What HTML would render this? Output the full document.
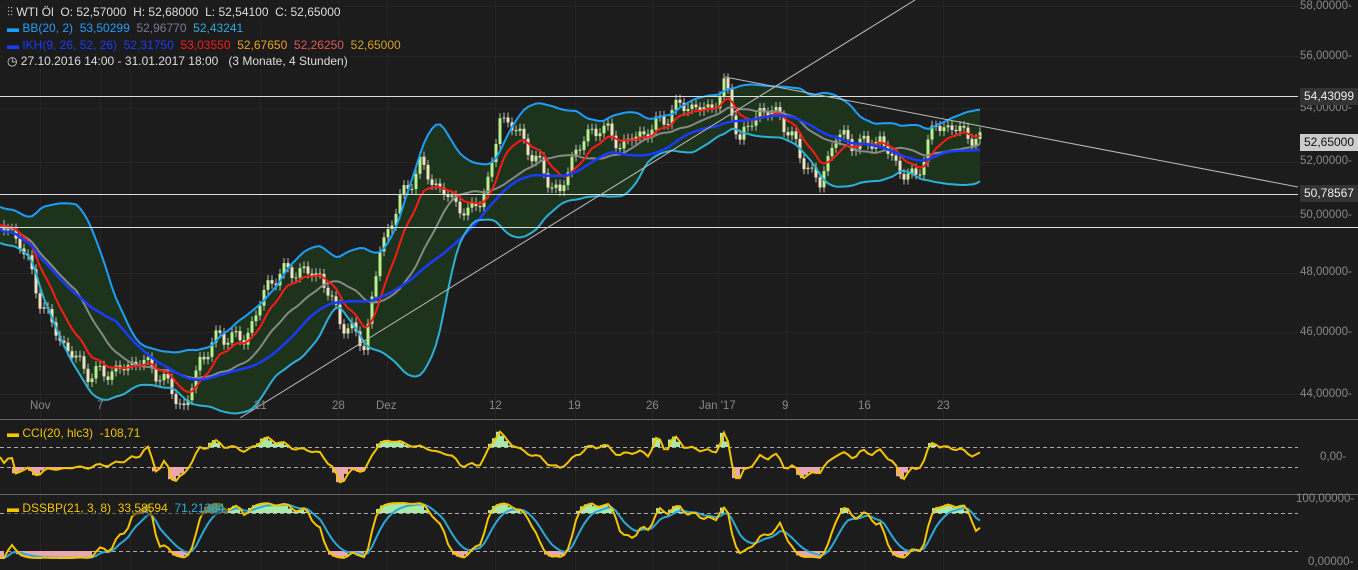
<!DOCTYPE html>
<html><head><meta charset="utf-8"><style>
body{margin:0;background:#1c1c1c;width:1358px;height:570px;overflow:hidden;font-family:"Liberation Sans",sans-serif;}
#c{position:absolute;left:0;top:0}
.lg{position:absolute;left:4px;font-size:12px;color:#ddd;white-space:pre;line-height:16px;background:rgba(28,28,28,.8);padding:0 3px}
.ax{position:absolute;font-size:11.5px;color:#888;}
.tag{position:absolute;left:1300px;width:58px;height:17px;font-size:12px;line-height:17px;text-align:center}
</style></head><body>
<svg id="c" width="1358" height="570"></svg>
<div class="lg" style="top:4px"><span style="color:#ccc">⫶⫶</span> WTI Öl  O: 52,57000  H: 52,68000  L: 52,54100  C: 52,65000</div>
<div class="lg" style="top:20px"><span style="color:#1e9fff">▬</span> <span style="color:#1e9fff">BB(20, 2)  53,50299</span>  <span style="color:#777a99">52,96770</span>  <span style="color:#2cb0d8">52,43241</span></div>
<div class="lg" style="top:37px"><span style="color:#1a3cff">▬ IKH(9, 26, 52, 26)  52,31750</span>  <span style="color:#ff1a1a">53,03550</span>  <span style="color:#f0a020">52,67650</span>  <span style="color:#e05858">52,26250</span>  <span style="color:#d8a020">52,65000</span></div>
<div class="lg" style="top:53px">◷ 27.10.2016 14:00 - 31.01.2017 18:00   (3 Monate, 4 Stunden)</div>
<div class="lg" style="top:425px;color:#f5c400">▬ CCI(20, hlc3)  -108,71</div>
<div class="lg" style="top:500px;color:#f5c400;background:rgba(28,28,28,.5)">▬ DSSBP(21, 3, 8)  33,58594  <span style="color:#2cb0d8">71,21384</span></div>
<div class="ax" style="left:1300px;top:0">58,00000-</div>
<div class="ax" style="left:1300px;top:50px">56,00000-</div>
<div class="ax" style="left:1300px;top:102px">54,00000-</div>
<div class="ax" style="left:1300px;top:155px">52,00000-</div>
<div class="ax" style="left:1300px;top:209px">50,00000-</div>
<div class="ax" style="left:1300px;top:266px">48,00000-</div>
<div class="ax" style="left:1300px;top:326px">46,00000-</div>
<div class="ax" style="left:1300px;top:388px">44,00000-</div>
<div class="ax" style="left:1320px;top:451px">0,00-</div>
<div class="ax" style="left:1296px;top:493px">100,00000-</div>
<div class="ax" style="left:1308px;top:556px">0,00000-</div>
<div class="tag" style="top:88px;background:#333;color:#eee">54,43099</div>
<div class="tag" style="top:134px;background:#ccc;color:#111">52,65000</div>
<div class="tag" style="top:185px;background:#333;color:#eee">50,78567</div>
<div class="ax" style="left:30px;top:400px">Nov</div>
<div class="ax" style="left:97px;top:400px">7</div>
<div class="ax" style="left:254px;top:400px">21</div>
<div class="ax" style="left:332px;top:400px">28</div>
<div class="ax" style="left:376px;top:400px">Dez</div>
<div class="ax" style="left:489px;top:400px">12</div>
<div class="ax" style="left:568px;top:400px">19</div>
<div class="ax" style="left:646px;top:400px">26</div>
<div class="ax" style="left:699px;top:400px">Jan '17</div>
<div class="ax" style="left:782px;top:400px">9</div>
<div class="ax" style="left:858px;top:400px">16</div>
<div class="ax" style="left:937px;top:400px">23</div>
<script>
var S=document.getElementById('c'),h='';
function L(x1,y1,x2,y2,c,w,d){h+='<line x1="'+x1+'" y1="'+y1+'" x2="'+x2+'" y2="'+y2+'" stroke="'+c+'" stroke-width="'+(w||1)+'"'+(d?' stroke-dasharray="'+d+'"':'')+'/>';}
[6,56,108,162,216,273,332,394].forEach(y=>L(0,y+.5,1298,y+.5,'#262626'));
[40,100,130,260,338,387,495,575,652,718,786,865,943].forEach(x=>L(x+.5,0,x+.5,570,'#262626'));
var K=[[0,225],[20,240],[40,300],[60,340],[90,375],[120,370],[140,360],[160,375],[185,410],[200,360],[220,335],[245,340],[270,280],[290,270],[320,275],[340,320],[365,345],[380,250],[400,200],[420,165],[440,190],[470,215],[490,180],[500,115],[520,135],[545,175],[560,195],[575,150],[600,125],[620,145],[650,130],[680,105],[710,110],[725,85],[740,140],[760,110],[780,115],[800,155],[820,185],[835,135],[860,145],[880,140],[900,170],[915,180],[935,125],[960,130],[980,142]];
function yi(x){for(var i=1;i<K.length;i++)if(x<=K[i][0]){var a=K[i-1],b=K[i],t=(x-a[0])/(b[0]-a[0]);return a[1]+(b[1]-a[1])*t;}return 142;}
var X=[],Y=[];for(var x=0;x<=980;x+=4){X.push(x);Y.push(yi(x)+6*Math.sin(x*0.37)+4*Math.sin(x*1.3));}
var n=Y.length;
function ema(a,p){var r=[],k=2/(p+1),v=a[0];a.forEach(z=>{v=v+k*(z-v);r.push(v)});return r;}
function sma(a,p){return a.map((z,i)=>{var s=0,c=0;for(var j=Math.max(0,i-p+1);j<=i;j++){s+=a[j];c++}return s/c});}
function pl(a,c,w,xs){return '<polyline fill="none" stroke="'+c+'" stroke-width="'+w+'" points="'+a.map((y,i)=>(xs||X)[i]+','+y.toFixed(1)).join(' ')+'"/>';}
var mid=sma(Y,20),up=[],lo=[];
for(var i=0;i<n;i++){var s=0,c=0;for(var j=Math.max(0,i-19);j<=i;j++){s+=(Y[j]-mid[i])**2;c++}var sd=Math.max(Math.sqrt(s/c),10);up.push(mid[i]-1.8*sd);lo.push(mid[i]+1.8*sd);}
up=ema(up,3);lo=ema(lo,3);
h+='<polygon fill="#1d331b" points="'+up.map((y,i)=>X[i]+','+y.toFixed(1)).join(' ')+' '+lo.map((y,i)=>X[i]+','+y.toFixed(1)).reverse().join(' ')+'"/>';
for(i=1;i<n;i++){var o=Y[i-1],cl=Y[i],g=cl<o;h+='<line x1="'+X[i]+'" y1="'+(Math.min(o,cl)-5)+'" x2="'+X[i]+'" y2="'+(Math.max(o,cl)+5)+'" stroke="#bbb" stroke-width="1"/><rect x="'+(X[i]-1.5)+'" y="'+Math.min(o,cl)+'" width="3" height="'+Math.max(1,Math.abs(cl-o))+'" fill="'+(g?'#b8f08a':'#f0e0c0')+'"/>';}
h+=pl(mid,'#888',2)+pl(ema(Y,9),'#ff1a1a',2)+pl(sma(Y,30).map((v,i)=>v+4),'#1a3cff',2.5)+pl(up,'#1e9fff',2)+pl(lo,'#2cb0d8',2);
L(0,96.5,1298,96.5,'#ddd');L(0,194.5,1298,194.5,'#ddd');L(0,227.5,1358,227.5,'#ddd');
L(240,418,915,0,'#bbb');L(725,77,1298,187,'#bbb');
h+='<rect x="0" y="418" width="1358" height="152" fill="#1c1c1c"/>';
[40,100,130,260,338,387,495,575,652,718,786,865,943].forEach(x=>L(x+.5,420,x+.5,570,'#262626'));
L(0,419.5,1358,419.5,'#666');L(0,494.5,1358,494.5,'#666');
L(0,447.5,1298,447.5,'#aaa',1,'4,3');L(0,467.5,1298,467.5,'#aaa',1,'4,3');
L(0,513.5,1298,513.5,'#aaa',1,'4,3');L(0,551.5,1298,551.5,'#aaa',1,'4,3');
var cci=[];for(i=0;i<n;i++){var m=mid[i],md=0,c=0;for(j=Math.max(0,i-19);j<=i;j++){md+=Math.abs(Y[j]-m);c++}md=Math.max(md/c,3);cci.push(-(Y[i]-m)/(0.015*md));}
var cy=cci.map(v=>Math.max(422,Math.min(490,457-v*0.1)));
function fills(a,top,bot){var s='';for(var i=1;i<a.length;i++){if(a[i]<top)s+='<rect x="'+X[i-1]+'" y="'+a[i]+'" width="4" height="'+(top-a[i])+'" fill="#a8e8a8"/>';if(a[i]>bot)s+='<rect x="'+X[i-1]+'" y="'+bot+'" width="4" height="'+(a[i]-bot)+'" fill="#e8a8b0"/>';}return s;}
h+=fills(cy,447,467)+pl(cy,'#f5c400',2);
var k=[];for(i=0;i<n;i++){var mx=-1e9,mn=1e9;for(j=Math.max(0,i-12);j<=i;j++){mx=Math.max(mx,Y[j]);mn=Math.min(mn,Y[j]);}k.push((mx-Y[i])/Math.max(mx-mn,1)*100);}
k=ema(ema(k,2),2);var sig=ema(k,6);
var ky=k.map(v=>558-v*0.55),sy=sig.map(v=>558-v*0.55);
h+=fills(ky,513,551)+pl(sy,'#2ca8d8',2)+pl(ky,'#f5c400',2);
S.innerHTML=h;
</script>
</body></html>
